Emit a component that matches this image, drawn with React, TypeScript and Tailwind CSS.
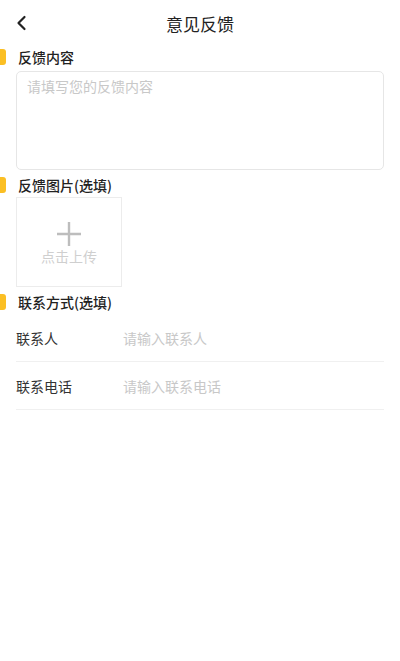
import React from "react";

const font = { fontFamily: '"Noto Sans CJK SC", "Noto Sans", sans-serif' };

function SectionTitle({ text }: { text: string }) {
  return (
    <div className="flex h-[18px] items-center">
      <div className="h-4 w-[6px] rounded-r-[3px] bg-[#fbbf24]" />
      <span className="ml-3 text-[14px] font-medium leading-none text-[#222]">{text}</span>
    </div>
  );
}

export default function App() {
  return (
    <div className="h-[661px] w-[400px] bg-white" style={font}>
      <div className="relative flex h-12 items-center justify-center">
        <svg className="absolute left-[15px] top-[15px]" width="14" height="16" viewBox="0 0 14 16" fill="none">
          <path d="M9.5 2 L3.5 8 L9.5 14" stroke="#222" strokeWidth="2.2" strokeLinecap="round" strokeLinejoin="round" />
        </svg>
        <span className="-mt-[1px] text-[17px] leading-none text-[#222]">意见反馈</span>
      </div>

      <SectionTitle text="反馈内容" />
      <div className="mx-4 mt-[5px] h-[99px] rounded-[5px] border border-[#e6e6e6] px-[10px] pt-[7px]">
        <span className="block text-[14px] leading-none text-[#c8c8c8]">请填写您的反馈内容</span>
      </div>

      <div className="mt-[6px]">
        <SectionTitle text="反馈图片(选填)" />
      </div>
      <div className="ml-4 mt-[3px] flex h-[90px] w-[106px] flex-col items-center border border-[#ececec] pt-[23px]">
        <svg width="26" height="26" viewBox="0 0 26 26">
          <path d="M13 1 V25 M1 13 H25" stroke="#bdbdbd" strokeWidth="2.4" />
        </svg>
        <span className="mt-[2px] text-[14px] leading-none text-[#cfcfcf]">点击上传</span>
      </div>

      <div className="mt-[6px]">
        <SectionTitle text="联系方式(选填)" />
      </div>
      <div className="mx-4 mt-[3px]">
        <div className="flex h-12 items-center border-b border-[#f0f0f0] pt-[2px]">
          <span className="w-[107px] text-[14px] text-[#333]">联系人</span>
          <span className="text-[14px] text-[#c8c8c8]">请输入联系人</span>
        </div>
        <div className="flex h-12 items-center border-b border-[#f0f0f0] pt-[2px]">
          <span className="w-[107px] text-[14px] text-[#333]">联系电话</span>
          <span className="text-[14px] text-[#c8c8c8]">请输入联系电话</span>
        </div>
      </div>
    </div>
  );
}
